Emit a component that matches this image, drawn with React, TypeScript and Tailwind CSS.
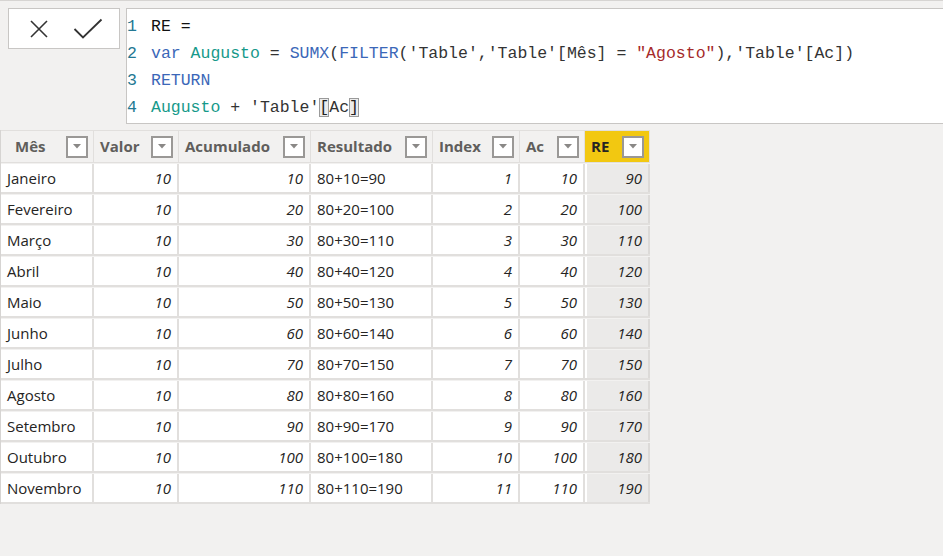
import React from "react";

type Row = {
  mes: string;
  valor: number;
  acumulado: number;
  resultado: string;
  index: number;
  ac: number;
  re: number;
};

const MONTHS = [
  "Janeiro",
  "Fevereiro",
  "Março",
  "Abril",
  "Maio",
  "Junho",
  "Julho",
  "Agosto",
  "Setembro",
  "Outubro",
  "Novembro",
];

const rows: Row[] = MONTHS.map((mes, i) => {
  const acc = (i + 1) * 10;
  return {
    mes,
    valor: 10,
    acumulado: acc,
    resultado: `80+${acc}=${80 + acc}`,
    index: i + 1,
    ac: acc,
    re: 80 + acc,
  };
});

const columns = [
  { key: "mes", label: "Mês", width: "w-[93px]", labelPad: "pl-[14px]" },
  { key: "valor", label: "Valor", width: "w-[85px]", labelPad: "pl-[6px]" },
  { key: "acumulado", label: "Acumulado", width: "w-[132px]", labelPad: "pl-[6px]" },
  { key: "resultado", label: "Resultado", width: "w-[122px]", labelPad: "pl-[6px]" },
  { key: "index", label: "Index", width: "w-[87px]", labelPad: "pl-[6px]" },
  { key: "ac", label: "Ac", width: "w-[65px]", labelPad: "pl-[6px]" },
  { key: "re", label: "RE", width: "w-[65px]", labelPad: "pl-[6px]" },
] as const;

function DropdownBox() {
  return (
    <span className="flex h-[22px] w-[22px] items-start justify-center border-2 border-[#9a9896] bg-white pt-[6px]">
      <svg width="8" height="5" viewBox="0 0 8 5">
        <path d="M0 0 L8 0 L4 4.5 Z" fill="#8a8886" />
      </svg>
    </span>
  );
}

function CodeLine({ n, children }: { n: number; children: React.ReactNode }) {
  return (
    <div className="flex h-[27px] items-center">
      <span className="w-[24px] text-[#237893]">{n}</span>
      <span className="whitespace-pre">{children}</span>
    </div>
  );
}

export default function App() {
  const kw = "text-[#3b67b8]";
  const vr = "text-[#16998a]";
  const str = "text-[#a52a2a]";
  const plain = "text-[#333333]";

  return (
    <div className="h-[556px] w-[943px] overflow-hidden bg-[#f2f1f0] font-['Open_Sans',sans-serif]">
      {/* formula bar */}
      <div className="flex h-[130px] items-start gap-[6px] border-t border-[#d6d4d2] pl-[8px] pt-[7px]">
        <div className="flex h-[41px] w-[112px] items-center justify-between border border-[#c8c6c4] bg-white pl-[20px] pr-[16px]">
          <svg width="20" height="20" viewBox="0 0 20 20">
            <path d="M2 2 L18 18 M18 2 L2 18" stroke="#333" strokeWidth="1.6" fill="none" />
          </svg>
          <svg width="30" height="22" viewBox="0 0 30 22">
            <path d="M1.5 11 L10 19.5 L28.5 1.5" stroke="#333" strokeWidth="1.8" fill="none" />
          </svg>
        </div>
        <div className="h-[116px] flex-1 border border-r-0 border-[#c8c6c4] bg-white pt-[5px] font-['Liberation_Mono',monospace] text-[16.5px] text-[#222]">
          <CodeLine n={1}>
            <span className="text-[#111]">RE =</span>
          </CodeLine>
          <CodeLine n={2}>
            <span className={kw}>var </span>
            <span className={vr}>Augusto</span>
            <span className={plain}> = </span>
            <span className={kw}>SUMX</span>
            <span className={plain}>(</span>
            <span className={kw}>FILTER</span>
            <span className={plain}>('Table','Table'[Mês] = </span>
            <span className={str}>"Agosto"</span>
            <span className={plain}>),'Table'[Ac])</span>
          </CodeLine>
          <CodeLine n={3}>
            <span className={kw}>RETURN</span>
          </CodeLine>
          <CodeLine n={4}>
            <span className={vr}>Augusto</span>
            <span className={plain}> + 'Table'</span>
            <span className="outline outline-1 -outline-offset-1 outline-[#9a9a9a] bg-[#ececec]">[</span>
            <span className={plain}>Ac</span>
            <span className="outline outline-1 -outline-offset-1 outline-[#9a9a9a] bg-[#ececec]">]</span>
          </CodeLine>
        </div>
      </div>

      {/* table */}
      <div className="w-[650px] border-l border-[#d6d4d2] text-[15px]">
        <div className="flex h-[33px] border-y border-[#e1dfdd]">
          {columns.map((c) => (
            <div
              key={c.key}
              className={`${c.width} flex items-center justify-between border-r border-[#e1dfdd] pr-[5px] ${c.labelPad} ${
                c.key === "re" ? "bg-[#f2c811] text-[#252423]" : "text-[#605e5c]"
              }`}
            >
              <span className="font-bold">{c.label}</span>
              <DropdownBox />
            </div>
          ))}
        </div>
        {rows.map((r) => (
          <div key={r.mes} className="flex h-[31px] border-b-2 border-[#e1dfdd] pt-px text-[#252423]">
            <div className="flex w-[93px] items-center border-r-2 border-[#e1dfdd] bg-white pl-[6px]">{r.mes}</div>
            <div className="flex w-[85px] items-center justify-end border-r-2 border-[#e1dfdd] bg-white pr-[6px] italic">
              {r.valor}
            </div>
            <div className="flex w-[132px] items-center justify-end border-r-2 border-[#e1dfdd] bg-white pr-[6px] italic">
              {r.acumulado}
            </div>
            <div className="flex w-[122px] items-center border-r-2 border-[#e1dfdd] bg-white pl-[6px]">{r.resultado}</div>
            <div className="flex w-[87px] items-center justify-end border-r-2 border-[#e1dfdd] bg-white pr-[6px] italic">
              {r.index}
            </div>
            <div className="flex w-[65px] items-center justify-end border-r-2 border-[#e1dfdd] bg-white pr-[6px] italic">
              {r.ac}
            </div>
            <div className="flex w-[65px] items-center justify-end border-r-2 border-l-2 border-l-white border-r-[#dcdad8] bg-[#ebeae9] pr-[6px] italic">
              {r.re}
            </div>
          </div>
        ))}
      </div>
    </div>
  );
}
